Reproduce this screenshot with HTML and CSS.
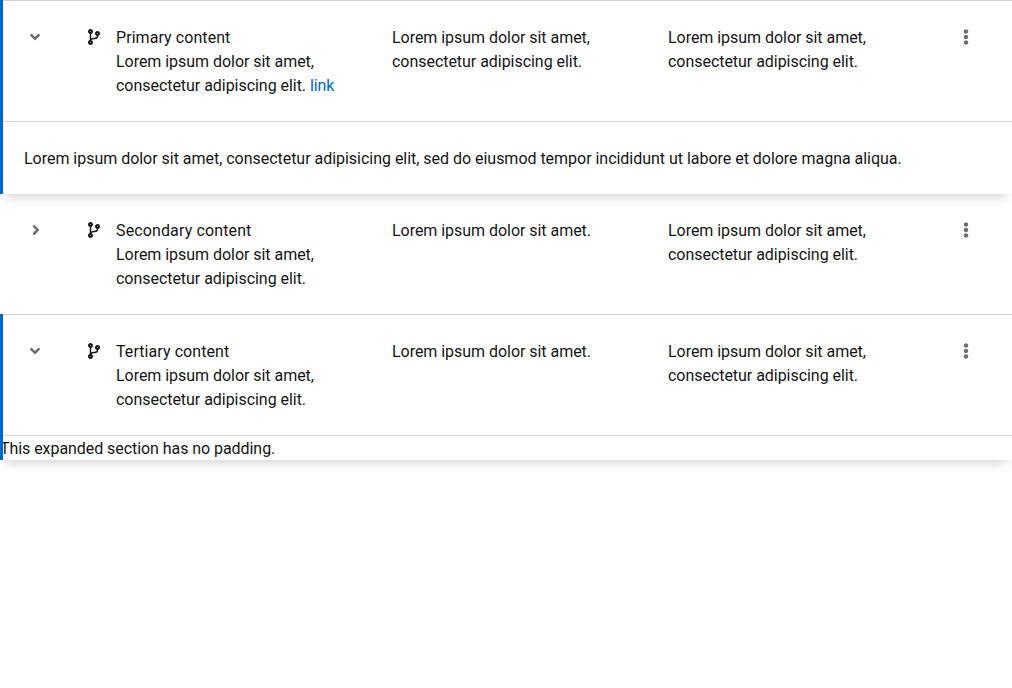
FILE: index.html
```
<!DOCTYPE html>
<html lang="en">
<head>
<meta charset="utf-8">
<title>Data list</title>
<link rel="stylesheet" href="styles.css">
</head>
<body>
<svg class="defs" aria-hidden="true">
  <symbol id="angle" viewBox="0 0 256 512"><path d="M224.3 273l-136 136c-9.4 9.4-24.6 9.4-33.9 0l-22.6-22.6c-9.4-9.4-9.4-24.6 0-33.9l96.4-96.4-96.4-96.4c-9.4-9.4-9.4-24.6 0-33.9L54.3 103c9.4-9.4 24.6-9.4 33.9 0l136 136c9.5 9.4 9.5 24.6.1 34z"/></symbol>
  <symbol id="branch" viewBox="0 0 384 512"><path d="M384 144c0-44.2-35.8-80-80-80s-80 35.8-80 80c0 36.4 24.3 67.1 57.5 76.8-.6 16.1-4.2 28.5-11 36.9-15.4 19.2-49.3 22.4-85.2 25.7-28.2 2.6-57.4 5.4-81.3 16.9v-144c32.5-10.2 56-40.5 56-76.3 0-44.2-35.8-80-80-80S0 35.8 0 80c0 35.8 23.5 66.1 56 76.3v199.3C23.5 365.9 0 396.2 0 432c0 44.2 35.8 80 80 80s80-35.8 80-80c0-34-21.2-63.1-51.2-74.6 3.1-5.2 7.8-9.8 14.9-13.4 16.2-8.2 40.4-10.4 66.1-12.8 42.2-3.9 90-8.4 118.2-43.4 14-17.4 21.1-39.8 21.6-67.9 31.6-10.8 54.4-40.7 54.4-75.9zM80 64c8.8 0 16 7.2 16 16s-7.2 16-16 16-16-7.2-16-16 7.2-16 16-16zm0 384c-8.8 0-16-7.2-16-16s7.2-16 16-16 16 7.2 16 16-7.2 16-16 16zm224-320c8.8 0 16 7.2 16 16s-7.2 16-16 16-16-7.2-16-16 7.2-16 16-16z"/></symbol>
  <symbol id="kebab" viewBox="0 0 192 512"><path d="M96 184c39.8 0 72 32.2 72 72s-32.2 72-72 72-72-32.2-72-72 32.2-72 72-72zM24 80c0 39.8 32.2 72 72 72s72-32.2 72-72S135.8 8 96 8 24 40.2 24 80zm0 352c0 39.8 32.2 72 72 72s72-32.2 72-72-32.2-72-72-72-72 32.2-72 72z"/></symbol>
</svg>
<main class="list">
  <article class="item bordered expanded">
    <div class="row">
      <div class="toggle"><svg class="angle"><use href="#angle"/></svg></div>
      <div class="icon"><svg class="branch"><use href="#branch"/></svg></div>
      <div class="cell"><span class="title">Primary content</span><br>Lorem ipsum dolor sit amet,<br>consectetur adipiscing elit. <a class="link">link</a></div>
      <div class="cell">Lorem ipsum dolor sit amet,<br>consectetur adipiscing elit.</div>
      <div class="cell">Lorem ipsum dolor sit amet,<br>consectetur adipiscing elit.</div>
      <div class="action"><svg class="kebab"><use href="#kebab"/></svg></div>
    </div>
    <section class="details padded">Lorem ipsum dolor sit amet, consectetur adipisicing elit, sed do eiusmod tempor incididunt ut labore et dolore magna aliqua.</section>
  </article>
  <article class="item">
    <div class="row">
      <div class="toggle"><svg class="angle"><use href="#angle"/></svg></div>
      <div class="icon"><svg class="branch"><use href="#branch"/></svg></div>
      <div class="cell"><span class="title wide">Secondary content</span><br>Lorem ipsum dolor sit amet,<br>consectetur adipiscing elit.</div>
      <div class="cell">Lorem ipsum dolor sit amet.</div>
      <div class="cell">Lorem ipsum dolor sit amet,<br>consectetur adipiscing elit.</div>
      <div class="action"><svg class="kebab"><use href="#kebab"/></svg></div>
    </div>
  </article>
  <article class="item bordered expanded">
    <div class="row">
      <div class="toggle"><svg class="angle"><use href="#angle"/></svg></div>
      <div class="icon"><svg class="branch"><use href="#branch"/></svg></div>
      <div class="cell"><span class="title">Tertiary content</span><br>Lorem ipsum dolor sit amet,<br>consectetur adipiscing elit.</div>
      <div class="cell">Lorem ipsum dolor sit amet.</div>
      <div class="cell">Lorem ipsum dolor sit amet,<br>consectetur adipiscing elit.</div>
      <div class="action"><svg class="kebab"><use href="#kebab"/></svg></div>
    </div>
    <section class="details flush">This expanded section has no padding.</section>
  </article>
</main>
</body>
</html>
```
FILE: styles.css
```
* { box-sizing: border-box; }
body { margin: 0; min-height: 100vh; background: #fff; color: #151515; font: 16px/24px Roboto, "Liberation Sans", sans-serif; }
.defs { position: absolute; width: 0; height: 0; }
.item { position: relative; }
.bordered { border-top: 1px solid #d2d2d2; }
.expanded { box-shadow: 0 9px 11px -6px rgba(3, 3, 3, .18); }
.expanded::before { content: ""; position: absolute; top: -1px; bottom: 0; left: 0; width: 3px; background: #06c; }
.row { display: grid; grid-template-columns: 64px 28px 276px 276px 276px 1fr; padding: 24px; }
.toggle svg, .icon svg, .action svg { display: block; height: 16px; margin-top: 4px; }
.toggle { padding-left: 8px; }
.toggle .angle { width: 8px; fill: #6a6e73; }
.expanded .angle { transform: translateX(-1px) rotate(90deg); }
.branch { width: 12px; fill: #151515; }
.kebab { width: 6px; fill: #6a6e73; margin-left: 19px; }
.cell { white-space: nowrap; letter-spacing: -.04px; padding-top: 1px; margin-bottom: -1px; }
.title { letter-spacing: .07px; }
.wide { letter-spacing: .13px; }
.link { color: #06c; letter-spacing: -.1px; }
.details { border-top: 1px solid #d2d2d2; white-space: nowrap; letter-spacing: -.026px; }
.padded { padding: 25px 24px 23px; }
.flush { padding-top: 1px; height: 25px; letter-spacing: -.06px; }
```
